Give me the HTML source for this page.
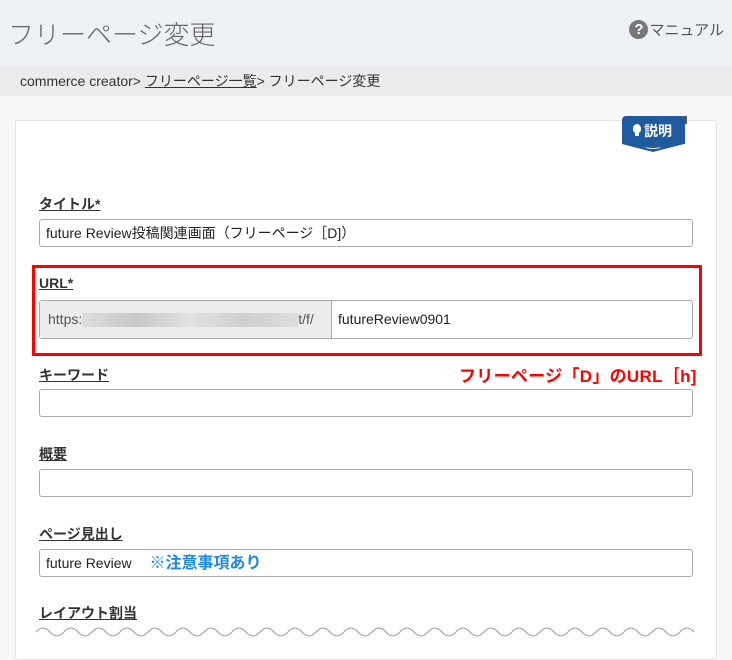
<!DOCTYPE html>
<html><head><meta charset="utf-8"><style>
*{box-sizing:border-box;margin:0;padding:0}
body{width:732px;height:640px;overflow:hidden;background:#f8f8f8;font-family:"Liberation Sans","Noto Sans CJK JP",sans-serif;position:relative;color:#222}
.hd{position:absolute;left:0;top:0;width:732px;height:65px;background:#edf1f5}
.hd h1{position:absolute;left:8px;top:15px;font-size:26px;font-weight:300;color:#666}
.man{position:absolute;right:8px;top:19px;font-size:15px;color:#555;display:flex;align-items:center}
.man i{display:inline-block;width:19px;height:19px;border-radius:50%;background:#777;color:#fff;font-style:normal;font-weight:bold;font-size:15px;text-align:center;line-height:19px;margin-right:1px}
.bc{position:absolute;left:0;top:65px;width:732px;height:31px;background:#ebebeb;font-size:14px;color:#333;padding:6px 0 0 20px}
.card{position:absolute;left:15px;top:120px;width:702px;height:540px;background:#fff;border:1px solid #e4e4e4;border-radius:3px}
.badge{position:absolute;left:622px;top:116px;width:63px;height:28px;background:#1f5a9e;border-radius:4px 4px 0 0;color:#fff;font-weight:bold;font-size:14px;padding:5px 0 0 22px}
.badge:after{content:"";position:absolute;left:0;top:28px;border-left:31.5px solid transparent;border-right:31.5px solid transparent;border-top:8px solid #1f5a9e}
.badge .b{position:absolute;left:11px;top:8px;width:8px;height:9px;background:#fff;border-radius:50% 50% 40% 40%}
.badge .b2{position:absolute;left:13px;top:17px;width:4px;height:3px;background:#fff}
.badge .c{position:absolute;left:23px;top:28px;width:16px;height:5px;border-bottom:1.5px solid #fff;z-index:2;border-radius:0 0 50% 50%}
.tab{position:absolute;left:683px;top:116px;width:4px;height:8px;background:#555}
.lb{position:absolute;left:39px;font-size:14px;font-weight:bold;color:#333;text-decoration:underline}
.in{position:absolute;left:39px;width:654px;height:28px;border:1px solid #aaa;border-radius:3px;background:#fff;font-size:14px;padding:0 0 0 6px;line-height:26px;color:#222}
.red{position:absolute;left:32px;top:265px;width:670px;height:91px;border:3px solid #f00}
.pre{position:absolute;left:0;top:0;width:292px;height:100%;background:#ececec;border-right:1px solid #aaa;padding:0 0 0 8px;color:#555;line-height:37px}
.blur{display:inline-block;width:216px;height:14px;vertical-align:middle;background:linear-gradient(90deg,#ddd,#c8c8c8,#e2e2e2,#cfcfcf,#ddd)}
.note{position:absolute;left:459px;top:362px;color:#f00;font-weight:bold;font-size:17px;letter-spacing:0.3px}
.wave{position:absolute;left:36px;top:624px;width:660px;height:16px}
</style></head><body>
<div class="hd"><h1>フリーページ変更</h1><div class="man"><i>?</i>マニュアル</div></div>
<div class="bc">commerce creator&gt; <u>フリーページ一覧</u>&gt; フリーページ変更</div>
<div class="card"></div>
<div class="tab"></div>
<div class="badge"><span class="b"></span><span class="b2"></span>説明<span class="c"></span></div>
<div class="lb" style="top:194px">タイトル*</div>
<div class="in" style="top:219px">future Review投稿関連画面（フリーページ［D]）</div>
<div class="red"></div>
<div class="lb" style="top:275px">URL*</div>
<div class="in" style="top:300px;height:39px;padding:0 0 0 298px;line-height:37px">
<div class="pre">https:<span class="blur"></span>t/f/</div>futureReview0901</div>
<div class="lb" style="top:365px">キーワード</div>
<div class="note">フリーページ「D」のURL［h]</div>
<div class="in" style="top:389px"></div>
<div class="lb" style="top:444px">概要</div>
<div class="in" style="top:469px"></div>
<div class="lb" style="top:524px">ページ見出し</div>
<div class="in" style="top:549px">future Review <span style="color:#1e88e5;font-weight:bold;font-size:16px;margin-left:14px">※注意事項あり</span></div>
<div class="lb" style="top:603px">レイアウト割当</div>
<svg class="wave" viewBox="0 0 660 16"><path d="M0 8 Q7 0 14 8 T28 8 T42 8 T56 8 T70 8 T84 8 T98 8 T112 8 T126 8 T140 8 T154 8 T168 8 T182 8 T196 8 T210 8 T224 8 T238 8 T252 8 T266 8 T280 8 T294 8 T308 8 T322 8 T336 8 T350 8 T364 8 T378 8 T392 8 T406 8 T420 8 T434 8 T448 8 T462 8 T476 8 T490 8 T504 8 T518 8 T532 8 T546 8 T560 8 T574 8 T588 8 T602 8 T616 8 T630 8 T644 8 T658 8" fill="none" stroke="#999" stroke-width="1"/></svg>
</body></html>
